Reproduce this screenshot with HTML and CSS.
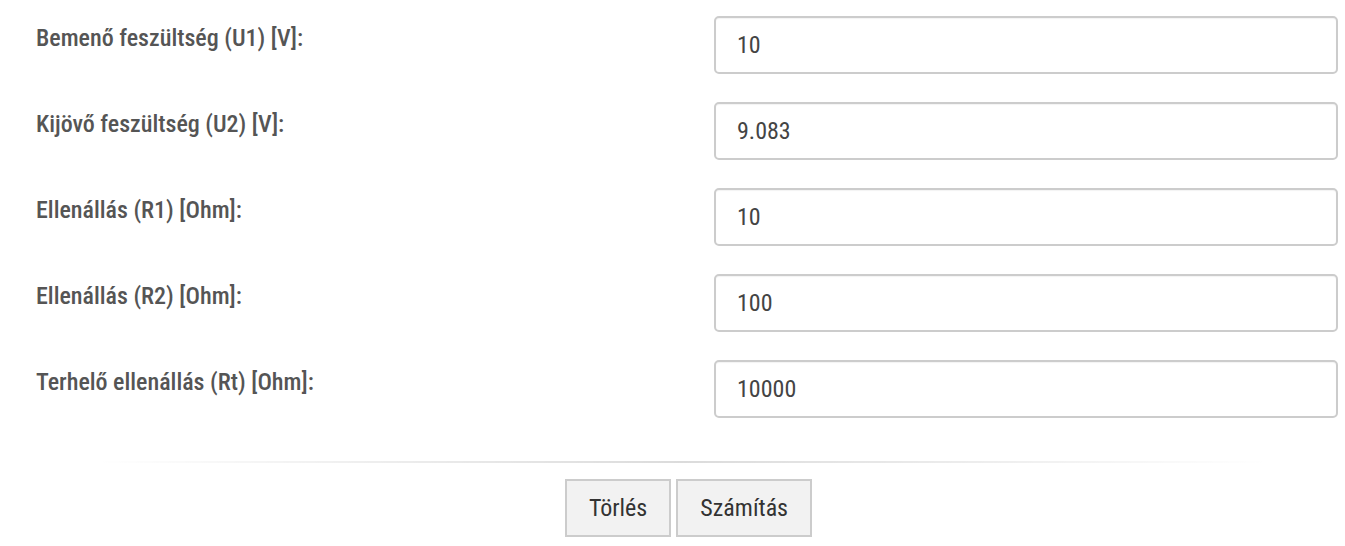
FILE: index.html
```
<!DOCTYPE html>
<html lang="hu"><head><meta charset="utf-8"><link rel="stylesheet" href="styles.css"></head>
<body>
<form class="calc">
  <div class="row"><label class="lbl">Bemenő feszültség (U1) [V]:</label><input class="inp" type="text" value="10"></div>
  <div class="row"><label class="lbl">Kijövő feszültség (U2) [V]:</label><input class="inp" type="text" value="9.083"></div>
  <div class="row"><label class="lbl">Ellenállás (R1) [Ohm]:</label><input class="inp" type="text" value="10"></div>
  <div class="row"><label class="lbl">Ellenállás (R2) [Ohm]:</label><input class="inp" type="text" value="100"></div>
  <div class="row"><label class="lbl">Terhelő ellenállás (Rt) [Ohm]:</label><input class="inp" type="text" value="10000"></div>
  <hr class="sep">
  <div class="actions"><button class="btn" type="button">Törlés</button><button class="btn" type="button">Számítás</button></div>
</form>
</body></html>
```
FILE: styles.css
```
html,body{margin:0;padding:0;background:#fff}
body{font-family:"Roboto Condensed",Roboto,sans-serif}
.calc{padding:16px 7px 0 36px;display:flex;flex-direction:column;gap:28px}
.row{display:flex;align-items:flex-start;height:58px}
.lbl{flex:0 0 678px;font-size:24px;font-weight:500;color:#555;padding-top:8px;line-height:normal}
.inp{flex:1;box-sizing:border-box;height:58px;margin:0;border:2px solid #ccc;border-radius:5px;padding:0 21px;font-family:"Roboto Condensed",Roboto,sans-serif;font-size:24px;color:#444;background:#fff;box-shadow:inset 0 1px 1px rgba(0,0,0,.05);outline:none}
.sep{margin:15px 68px 0 59px;height:2px;border:0;background:linear-gradient(to right,rgba(0,0,0,0),rgba(0,0,0,.14) 50%,rgba(0,0,0,0))}
.actions{display:flex;justify-content:center;gap:5px;margin-top:-12px;padding-left:3px}
.btn{box-sizing:border-box;height:58px;padding:0 22px;border:2px solid #ccc;background:#f2f2f2;font-family:"Roboto Condensed",Roboto,sans-serif;font-size:24px;color:#333;border-radius:0}
```
